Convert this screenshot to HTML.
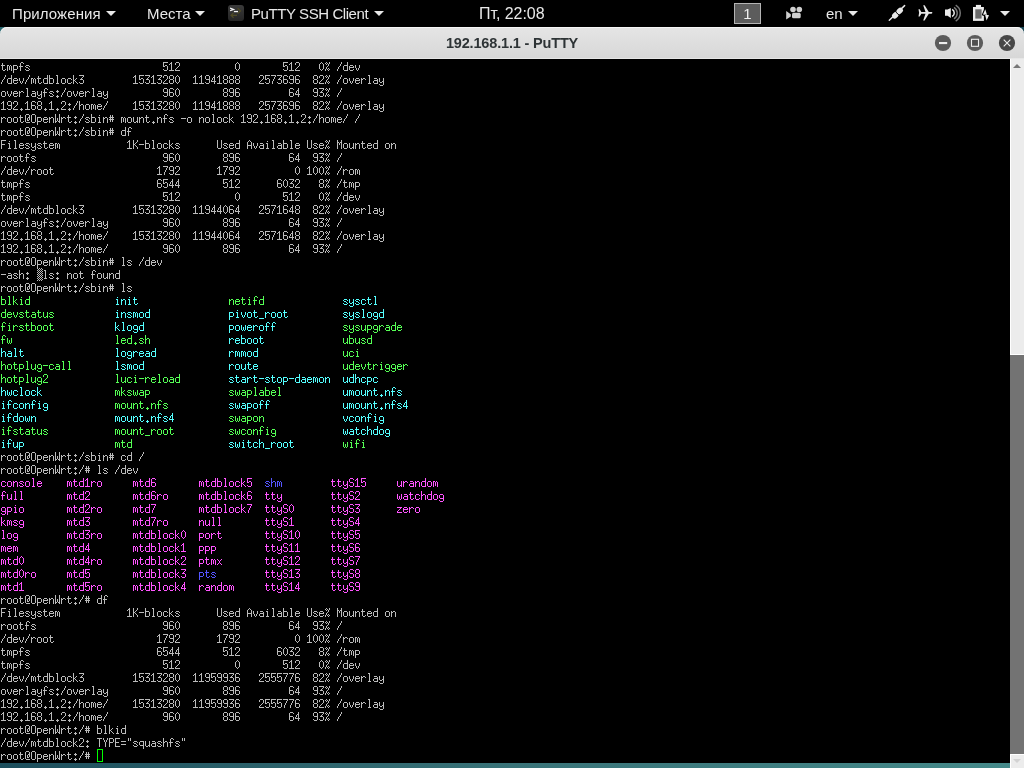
<!DOCTYPE html>
<html><head><meta charset="utf-8"><style>
*{margin:0;padding:0;box-sizing:border-box}
html,body{width:1024px;height:768px;overflow:hidden;background:#000}
body{position:relative;font-family:"Liberation Sans",sans-serif}
.abs{position:absolute}
#panel{left:0;top:0;width:1024px;height:27px;background:#000;color:#e8e8e8;font-size:15px;will-change:transform}
#panel .t{position:absolute;top:5px;line-height:17px;white-space:nowrap}
.arr{position:absolute;width:0;height:0;border-left:5px solid transparent;border-right:5px solid transparent;border-top:5px solid #e8e8e8}
#wall{left:0;top:27px;width:1024px;height:741px;background:linear-gradient(to right,#1c4e5c,#397378 50%,#458a8a)}
#title{left:0;top:27px;width:1024px;height:32px;border-radius:7px 7px 0 0;background:linear-gradient(#e5e5e5,#d7d7d7);box-shadow:inset 0 1px 0 #f6f6f6, inset 0 -1px 0 #e6e6e6;will-change:transform}
#title .tt{position:absolute;left:0;width:1024px;top:8px;letter-spacing:-0.17px;text-align:center;font-weight:bold;font-size:14.5px;color:#2e3436;line-height:17px}
#termbg{left:0;top:59px;width:1010px;height:704px;background:#000}
#term{position:absolute;left:0;top:60px}
#sb{left:1010px;top:59px;width:14px;height:709px;background:#ececec;border-left:1px solid #fff}
#thumb{left:1010px;top:354px;width:14px;height:401px;background:#737373;border-top:1px solid #fff;border-bottom:1px solid #fff}
svg.ic{position:absolute;overflow:visible}
</style></head><body>
<div id="wall" class="abs"></div>
<div class="abs" style="left:0;top:27px;width:1024px;height:14px;background:linear-gradient(to right,#2a6870,#235e66 50%,#184654)"></div>
<div id="panel" class="abs">
  <div class="t" style="left:12px;letter-spacing:0.1px">Приложения</div><div class="arr" style="left:106px;top:11px"></div>
  <div class="t" style="left:147px">Места</div><div class="arr" style="left:195px;top:11px"></div>
  <svg class="ic" style="left:228px;top:5px" width="16" height="16" viewBox="0 0 16 16">
    <defs><linearGradient id="pg" x1="0" y1="0" x2="0" y2="1"><stop offset="0" stop-color="#3b3b3b"/><stop offset="1" stop-color="#252525"/></linearGradient></defs>
    <rect x="0" y="0" width="16" height="16" rx="3" fill="url(#pg)"/>
    <path d="M9.6 3.3l2.9 2.6-2.9 2.6M5.6 7.9l-2.6 2.4 2.6 2.4M3.2 10.3h5.8" stroke="#4f4b25" stroke-width="1.2" fill="none"/>
    <path d="M2.1 3.1L5.6 4.4L2.1 5.7" stroke="#f4f4f4" stroke-width="1.2" fill="none"/>
    <rect x="5.9" y="5.9" width="4.1" height="1.3" fill="#f4f4f4"/>
  </svg>
  <div class="t" style="left:251px;letter-spacing:-0.42px">PuTTY SSH Client</div><div class="arr" style="left:374px;top:11px"></div>
  <div class="t" style="left:479px;font-size:16px;top:5px;letter-spacing:-0.05px">Пт, 22:08</div>
  <div class="abs" style="left:734px;top:3px;width:27px;height:21px;background:#5c5c5c;border:1px solid #b4b4b4;color:#f0f0f0;text-align:center;line-height:19px;font-size:15px">1</div>
  <svg class="ic" style="left:786px;top:6px" width="16" height="14" viewBox="0 0 16 14" fill="#cfcfcf">
    <circle cx="7" cy="3.5" r="2.8"/><circle cx="13.3" cy="3.5" r="2.8"/>
    <rect x="6" y="6.8" width="8.7" height="5.5" rx="1.6"/>
    <path d="M0.2 5.1L4.8 8.2V10.4L0.2 13.6Z"/>
  </svg>
  <div class="t" style="left:826px">en</div><div class="arr" style="left:848px;top:11px"></div>
  <svg class="ic" style="left:886px;top:3px" width="22" height="20" viewBox="0 0 22 20">
    <path d="M3.3 17.3L18.6 2.6" stroke="#e8e8e8" stroke-width="1.5" stroke-linecap="round"/>
    <path d="M6.3 11.5l2.5 2.5" stroke="#000" stroke-width="0"/>
    <rect x="5.9" y="9.6" width="6.8" height="5.4" rx="2.3" transform="rotate(-44 9.3 12.3)" fill="#e8e8e8"/>
    <rect x="10.3" y="5.2" width="6.8" height="5.4" rx="2.3" transform="rotate(-44 13.7 7.9)" fill="#e8e8e8"/>
    <path d="M9.6 8.8L13.1 12.2" stroke="#000" stroke-width="1"/>
  </svg>
  <svg class="ic" style="left:917px;top:4px" width="16" height="16" viewBox="0 0 16 16" fill="#e8e8e8">
    <path d="M1.5 5.2h1.2l1.6 2.7h4.2L6.2 1.2h1.4l4.2 6.7h2.6c0.6 0 1 0.5 1 0.9s-0.4 0.9-1 0.9h-2.6l-4.2 6.7H6.2l2.3-6.7H4.3l-1.6 2.7H1.5l0.6-3.6z"/>
  </svg>
  <svg class="ic" style="left:944px;top:4px" width="18" height="18" viewBox="0 0 18 18">
    <path d="M1 5.6h2.6L6.8 4V13.9L3.6 11.7H1z" fill="#ececec"/>
    <path d="M8.2 5.6a4.2 4.2 0 0 1 0 7.2" stroke="#ececec" stroke-width="1.5" fill="none" transform="translate(0 -0.3)"/>
    <path d="M9.8 3.2a6.8 6.8 0 0 1 0 11.6" stroke="#7a7a7a" stroke-width="1.4" fill="none" transform="translate(0.2 0.1)"/>
    <path d="M11.4 1a9.3 9.3 0 0 1 0 16" stroke="#7a7a7a" stroke-width="1.4" fill="none" transform="translate(0.3 0.1)"/>
  </svg>
  <svg class="ic" style="left:972px;top:4px" width="18" height="18" viewBox="0 0 18 18">
    <rect x="3.9" y="0.9" width="5.1" height="2.3" fill="#ececec"/>
    <rect x="2.15" y="4.15" width="8.6" height="11.6" fill="#6b6b6b" stroke="#ececec" stroke-width="2.3"/>
    <path d="M13.3 5.3L11 10.6L15 11ZM13 10.6L17 11.3L14.6 16.6Z" fill="#000" stroke="#000" stroke-width="2.2" stroke-linejoin="round"/><path d="M13.3 5.3L11 10.6L15 11ZM13 10.6L17 11.3L14.6 16.6Z" fill="#ececec"/>
  </svg>
  <div class="arr" style="left:1000px;top:11px"></div>
</div>
<div id="title" class="abs">
  <div class="tt">192.168.1.1 - PuTTY</div>
  <svg class="ic" style="left:935px;top:8px" width="16" height="16" viewBox="0 0 16 16">
    <circle cx="8" cy="8" r="8.1" fill="#5c5c5c"/><rect x="4" y="7" width="8.2" height="2.1" fill="#eeeeee"/>
  </svg>
  <svg class="ic" style="left:967px;top:8px" width="16" height="16" viewBox="0 0 16 16">
    <circle cx="8" cy="8" r="8.1" fill="#5c5c5c"/><rect x="4.5" y="4.3" width="7" height="7" fill="#4f4f4f" stroke="#eeeeee" stroke-width="1.1"/>
  </svg>
  <svg class="ic" style="left:999px;top:8px" width="16" height="16" viewBox="0 0 16 16">
    <circle cx="8" cy="8" r="8.1" fill="#474747"/><path d="M4.7 4.6L11.4 11.3M11.4 4.6L4.7 11.3" stroke="#eeeeee" stroke-width="1.1"/>
  </svg>
</div>
<div id="termbg" class="abs"></div>
<div id="sb" class="abs"></div>
<div id="thumb" class="abs"></div>
<svg class="ic" style="left:1012px;top:63px" width="10" height="6" viewBox="0 0 10 6"><path d="M1 5L5 1L9 5Z" fill="#777"/></svg>
<svg class="ic" style="left:1012px;top:758px" width="10" height="6" viewBox="0 0 10 6"><path d="M1 1L5 5L9 1Z" fill="#d2d2d2"/></svg>
<svg id="term" width="1010" height="704" viewBox="0 0 1010 704" shape-rendering="crispEdges"><defs>
<path id="g2" d="M0 0h1v1h-1zM2 0h1v1h-1zM4 0h1v1h-1zM1 1h1v1h-1zM3 1h1v1h-1zM5 1h1v1h-1zM0 2h1v1h-1zM2 2h1v1h-1zM4 2h1v1h-1zM1 3h1v1h-1zM3 3h1v1h-1zM5 3h1v1h-1zM0 4h1v1h-1zM2 4h1v1h-1zM4 4h1v1h-1zM1 5h1v1h-1zM3 5h1v1h-1zM5 5h1v1h-1zM0 6h1v1h-1zM2 6h1v1h-1zM4 6h1v1h-1zM1 7h1v1h-1zM3 7h1v1h-1zM5 7h1v1h-1zM0 8h1v1h-1zM2 8h1v1h-1zM4 8h1v1h-1zM1 9h1v1h-1zM3 9h1v1h-1zM5 9h1v1h-1zM0 10h1v1h-1zM2 10h1v1h-1zM4 10h1v1h-1zM1 11h1v1h-1zM3 11h1v1h-1zM5 11h1v1h-1zM0 12h1v1h-1zM2 12h1v1h-1zM4 12h1v1h-1z"/>
<path id="g34" d="M1 2h1v3h-1zM3 2h1v3h-1z"/>
<path id="g35" d="M1 3h1v2h-1zM3 3h1v2h-1zM0 5h5v1h-5zM1 6h1v1h-1zM3 6h1v1h-1zM0 7h5v1h-5zM1 8h1v2h-1zM3 8h1v2h-1z"/>
<path id="g37" d="M1 2h1v1h-1zM4 2h1v2h-1zM0 3h1v1h-1zM2 3h1v1h-1zM1 4h1v1h-1zM3 4h1v2h-1zM2 6h1v1h-1zM1 7h1v2h-1zM3 8h1v1h-1zM0 9h1v2h-1zM2 9h1v1h-1zM4 9h1v1h-1zM3 10h1v1h-1z"/>
<path id="g45" d="M0 6h5v1h-5z"/>
<path id="g46" d="M2 9h1v1h-1zM1 10h3v1h-3zM2 11h1v1h-1z"/>
<path id="g47" d="M4 2h1v2h-1zM3 4h1v2h-1zM2 6h1v1h-1zM1 7h1v2h-1zM0 9h1v2h-1z"/>
<path id="g48" d="M2 2h1v1h-1zM1 3h1v1h-1zM3 3h1v1h-1zM0 4h1v5h-1zM4 4h1v5h-1zM1 9h1v1h-1zM3 9h1v1h-1zM2 10h1v1h-1z"/>
<path id="g49" d="M2 2h1v1h-1zM1 3h2v1h-2zM0 4h1v1h-1zM2 4h1v6h-1zM0 10h5v1h-5z"/>
<path id="g50" d="M1 2h3v1h-3zM0 3h1v2h-1zM4 3h1v3h-1zM3 6h1v1h-1zM2 7h1v1h-1zM1 8h1v1h-1zM0 9h1v1h-1zM0 10h5v1h-5z"/>
<path id="g51" d="M0 2h5v1h-5zM4 3h1v1h-1zM3 4h1v1h-1zM2 5h1v1h-1zM1 6h3v1h-3zM4 7h1v3h-1zM0 9h1v1h-1zM1 10h3v1h-3z"/>
<path id="g52" d="M3 2h1v2h-1zM2 4h2v1h-2zM1 5h1v2h-1zM3 5h1v3h-1zM0 7h1v1h-1zM0 8h5v1h-5zM3 9h1v2h-1z"/>
<path id="g53" d="M0 2h5v1h-5zM0 3h1v3h-1zM2 5h2v1h-2zM0 6h2v1h-2zM4 6h1v4h-1zM0 9h1v1h-1zM1 10h3v1h-3z"/>
<path id="g54" d="M1 2h3v1h-3zM0 3h1v3h-1zM4 3h1v1h-1zM0 6h4v1h-4zM0 7h1v3h-1zM4 7h1v3h-1zM1 10h3v1h-3z"/>
<path id="g55" d="M0 2h5v1h-5zM4 3h1v1h-1zM3 4h1v2h-1zM2 6h1v2h-1zM1 8h1v3h-1z"/>
<path id="g56" d="M1 2h3v1h-3zM0 3h1v3h-1zM4 3h1v3h-1zM1 6h3v1h-3zM0 7h1v3h-1zM4 7h1v3h-1zM1 10h3v1h-3z"/>
<path id="g57" d="M1 2h3v1h-3zM0 3h1v3h-1zM4 3h1v3h-1zM1 6h4v1h-4zM4 7h1v3h-1zM0 9h1v1h-1zM1 10h3v1h-3z"/>
<path id="g58" d="M2 4h1v1h-1zM1 5h3v1h-3zM2 6h1v1h-1zM2 9h1v1h-1zM1 10h3v1h-3zM2 11h1v1h-1z"/>
<path id="g61" d="M0 5h5v1h-5zM0 8h5v1h-5z"/>
<path id="g64" d="M1 2h3v1h-3zM0 3h1v7h-1zM4 3h1v2h-1zM3 5h2v1h-2zM2 6h1v2h-1zM4 6h1v2h-1zM2 8h2v1h-2zM1 10h4v1h-4z"/>
<path id="g65" d="M2 2h1v1h-1zM1 3h1v1h-1zM3 3h1v1h-1zM0 4h1v3h-1zM4 4h1v3h-1zM0 7h5v1h-5zM0 8h1v3h-1zM4 8h1v3h-1z"/>
<path id="g69" d="M0 2h5v1h-5zM0 3h1v3h-1zM0 6h4v1h-4zM0 7h1v3h-1zM0 10h5v1h-5z"/>
<path id="g70" d="M0 2h5v1h-5zM0 3h1v3h-1zM0 6h4v1h-4zM0 7h1v4h-1z"/>
<path id="g75" d="M0 2h1v4h-1zM4 2h1v2h-1zM3 4h1v1h-1zM2 5h1v1h-1zM0 6h2v1h-2zM0 7h1v4h-1zM2 7h1v1h-1zM3 8h1v1h-1zM4 9h1v2h-1z"/>
<path id="g77" d="M0 2h1v2h-1zM4 2h1v2h-1zM0 4h2v1h-2zM3 4h2v1h-2zM0 5h1v6h-1zM2 5h1v2h-1zM4 5h1v6h-1z"/>
<path id="g79" d="M1 2h3v1h-3zM0 3h1v7h-1zM4 3h1v7h-1zM1 10h3v1h-3z"/>
<path id="g80" d="M0 2h4v1h-4zM0 3h1v3h-1zM4 3h1v3h-1zM0 6h4v1h-4zM0 7h1v4h-1z"/>
<path id="g83" d="M1 2h3v1h-3zM0 3h1v3h-1zM4 3h1v1h-1zM1 6h3v1h-3zM4 7h1v3h-1zM0 9h1v1h-1zM1 10h3v1h-3z"/>
<path id="g84" d="M0 2h5v1h-5zM2 3h1v8h-1z"/>
<path id="g85" d="M0 2h1v8h-1zM4 2h1v8h-1zM1 10h3v1h-3z"/>
<path id="g87" d="M0 2h1v7h-1zM4 2h1v7h-1zM2 6h1v3h-1zM0 9h2v1h-2zM3 9h2v1h-2zM0 10h1v1h-1zM4 10h1v1h-1z"/>
<path id="g89" d="M0 2h1v2h-1zM4 2h1v2h-1zM1 4h1v2h-1zM3 4h1v2h-1zM2 6h1v5h-1z"/>
<path id="g95" d="M0 11h5v1h-5z"/>
<path id="g97" d="M1 5h3v1h-3zM4 6h1v1h-1zM1 7h4v1h-4zM0 8h1v2h-1zM4 8h1v2h-1zM1 10h4v1h-4z"/>
<path id="g98" d="M0 2h1v3h-1zM0 5h4v1h-4zM0 6h1v4h-1zM4 6h1v4h-1zM0 10h4v1h-4z"/>
<path id="g99" d="M1 5h3v1h-3zM0 6h1v4h-1zM4 6h1v1h-1zM4 9h1v1h-1zM1 10h3v1h-3z"/>
<path id="g100" d="M4 2h1v3h-1zM1 5h4v1h-4zM0 6h1v4h-1zM4 6h1v4h-1zM1 10h4v1h-4z"/>
<path id="g101" d="M1 5h3v1h-3zM0 6h1v1h-1zM4 6h1v1h-1zM0 7h5v1h-5zM0 8h1v2h-1zM4 9h1v1h-1zM1 10h3v1h-3z"/>
<path id="g102" d="M2 2h2v1h-2zM1 3h1v3h-1zM4 3h1v1h-1zM0 6h4v1h-4zM1 7h1v4h-1z"/>
<path id="g103" d="M1 5h3v1h-3zM0 6h1v3h-1zM4 6h1v3h-1zM1 9h4v1h-4zM4 10h1v2h-1zM0 11h1v1h-1zM1 12h3v1h-3z"/>
<path id="g104" d="M0 2h1v4h-1zM2 5h2v1h-2zM0 6h2v1h-2zM4 6h1v5h-1zM0 7h1v4h-1z"/>
<path id="g105" d="M2 3h1v1h-1zM1 5h2v1h-2zM2 6h1v4h-1zM1 10h3v1h-3z"/>
<path id="g107" d="M0 2h1v5h-1zM3 5h1v1h-1zM2 6h1v1h-1zM0 7h2v1h-2zM0 8h1v3h-1zM2 8h1v1h-1zM3 9h1v1h-1zM4 10h1v1h-1z"/>
<path id="g108" d="M1 2h2v1h-2zM2 3h1v7h-1zM1 10h3v1h-3z"/>
<path id="g109" d="M0 5h2v1h-2zM3 5h1v1h-1zM0 6h1v5h-1zM2 6h1v4h-1zM4 6h1v5h-1z"/>
<path id="g110" d="M0 5h1v1h-1zM2 5h2v1h-2zM0 6h2v1h-2zM4 6h1v5h-1zM0 7h1v4h-1z"/>
<path id="g111" d="M1 5h3v1h-3zM0 6h1v4h-1zM4 6h1v4h-1zM1 10h3v1h-3z"/>
<path id="g112" d="M0 5h4v1h-4zM0 6h1v3h-1zM4 6h1v3h-1zM0 9h4v1h-4zM0 10h1v3h-1z"/>
<path id="g113" d="M1 5h4v1h-4zM0 6h1v3h-1zM4 6h1v3h-1zM1 9h4v1h-4zM4 10h1v3h-1z"/>
<path id="g114" d="M0 5h1v1h-1zM2 5h2v1h-2zM0 6h2v1h-2zM4 6h1v1h-1zM0 7h1v4h-1z"/>
<path id="g115" d="M1 5h3v1h-3zM0 6h1v1h-1zM4 6h1v1h-1zM1 7h2v1h-2zM3 8h1v1h-1zM0 9h1v1h-1zM4 9h1v1h-1zM1 10h3v1h-3z"/>
<path id="g116" d="M1 3h1v2h-1zM0 5h4v1h-4zM1 6h1v4h-1zM4 9h1v1h-1zM2 10h2v1h-2z"/>
<path id="g117" d="M0 5h1v5h-1zM4 5h1v4h-1zM3 9h2v1h-2zM1 10h2v1h-2zM4 10h1v1h-1z"/>
<path id="g118" d="M0 5h1v3h-1zM4 5h1v3h-1zM1 8h1v2h-1zM3 8h1v2h-1zM2 10h1v1h-1z"/>
<path id="g119" d="M0 5h1v5h-1zM4 5h1v5h-1zM2 7h1v3h-1zM1 10h1v1h-1zM3 10h1v1h-1z"/>
<path id="g120" d="M0 5h1v1h-1zM4 5h1v1h-1zM1 6h1v1h-1zM3 6h1v1h-1zM2 7h1v2h-1zM1 9h1v1h-1zM3 9h1v1h-1zM0 10h1v1h-1zM4 10h1v1h-1z"/>
<path id="g121" d="M0 5h1v4h-1zM4 5h1v3h-1zM3 8h2v1h-2zM1 9h2v1h-2zM4 9h1v3h-1zM0 11h1v1h-1zM1 12h3v1h-3z"/>
<path id="g122" d="M0 5h5v1h-5zM3 6h1v1h-1zM2 7h1v1h-1zM1 8h1v1h-1zM0 9h1v1h-1zM0 10h5v1h-5z"/>
</defs>
<g fill="#bbbbbb" transform="translate(0 0)"><use href="#g116" x="1"/><use href="#g109" x="7"/><use href="#g112" x="13"/><use href="#g102" x="19"/><use href="#g115" x="25"/><use href="#g53" x="163"/><use href="#g49" x="169"/><use href="#g50" x="175"/><use href="#g48" x="235"/><use href="#g53" x="283"/><use href="#g49" x="289"/><use href="#g50" x="295"/><use href="#g48" x="319"/><use href="#g37" x="325"/><use href="#g47" x="337"/><use href="#g100" x="343"/><use href="#g101" x="349"/><use href="#g118" x="355"/></g>
<g fill="#bbbbbb" transform="translate(0 13)"><use href="#g47" x="1"/><use href="#g100" x="7"/><use href="#g101" x="13"/><use href="#g118" x="19"/><use href="#g47" x="25"/><use href="#g109" x="31"/><use href="#g116" x="37"/><use href="#g100" x="43"/><use href="#g98" x="49"/><use href="#g108" x="55"/><use href="#g111" x="61"/><use href="#g99" x="67"/><use href="#g107" x="73"/><use href="#g51" x="79"/><use href="#g49" x="133"/><use href="#g53" x="139"/><use href="#g51" x="145"/><use href="#g49" x="151"/><use href="#g51" x="157"/><use href="#g50" x="163"/><use href="#g56" x="169"/><use href="#g48" x="175"/><use href="#g49" x="193"/><use href="#g49" x="199"/><use href="#g57" x="205"/><use href="#g52" x="211"/><use href="#g49" x="217"/><use href="#g56" x="223"/><use href="#g56" x="229"/><use href="#g56" x="235"/><use href="#g50" x="259"/><use href="#g53" x="265"/><use href="#g55" x="271"/><use href="#g51" x="277"/><use href="#g54" x="283"/><use href="#g57" x="289"/><use href="#g54" x="295"/><use href="#g56" x="313"/><use href="#g50" x="319"/><use href="#g37" x="325"/><use href="#g47" x="337"/><use href="#g111" x="343"/><use href="#g118" x="349"/><use href="#g101" x="355"/><use href="#g114" x="361"/><use href="#g108" x="367"/><use href="#g97" x="373"/><use href="#g121" x="379"/></g>
<g fill="#bbbbbb" transform="translate(0 26)"><use href="#g111" x="1"/><use href="#g118" x="7"/><use href="#g101" x="13"/><use href="#g114" x="19"/><use href="#g108" x="25"/><use href="#g97" x="31"/><use href="#g121" x="37"/><use href="#g102" x="43"/><use href="#g115" x="49"/><use href="#g58" x="55"/><use href="#g47" x="61"/><use href="#g111" x="67"/><use href="#g118" x="73"/><use href="#g101" x="79"/><use href="#g114" x="85"/><use href="#g108" x="91"/><use href="#g97" x="97"/><use href="#g121" x="103"/><use href="#g57" x="163"/><use href="#g54" x="169"/><use href="#g48" x="175"/><use href="#g56" x="223"/><use href="#g57" x="229"/><use href="#g54" x="235"/><use href="#g54" x="289"/><use href="#g52" x="295"/><use href="#g57" x="313"/><use href="#g51" x="319"/><use href="#g37" x="325"/><use href="#g47" x="337"/></g>
<g fill="#bbbbbb" transform="translate(0 39)"><use href="#g49" x="1"/><use href="#g57" x="7"/><use href="#g50" x="13"/><use href="#g46" x="19"/><use href="#g49" x="25"/><use href="#g54" x="31"/><use href="#g56" x="37"/><use href="#g46" x="43"/><use href="#g49" x="49"/><use href="#g46" x="55"/><use href="#g50" x="61"/><use href="#g58" x="67"/><use href="#g47" x="73"/><use href="#g104" x="79"/><use href="#g111" x="85"/><use href="#g109" x="91"/><use href="#g101" x="97"/><use href="#g47" x="103"/><use href="#g49" x="133"/><use href="#g53" x="139"/><use href="#g51" x="145"/><use href="#g49" x="151"/><use href="#g51" x="157"/><use href="#g50" x="163"/><use href="#g56" x="169"/><use href="#g48" x="175"/><use href="#g49" x="193"/><use href="#g49" x="199"/><use href="#g57" x="205"/><use href="#g52" x="211"/><use href="#g49" x="217"/><use href="#g56" x="223"/><use href="#g56" x="229"/><use href="#g56" x="235"/><use href="#g50" x="259"/><use href="#g53" x="265"/><use href="#g55" x="271"/><use href="#g51" x="277"/><use href="#g54" x="283"/><use href="#g57" x="289"/><use href="#g54" x="295"/><use href="#g56" x="313"/><use href="#g50" x="319"/><use href="#g37" x="325"/><use href="#g47" x="337"/><use href="#g111" x="343"/><use href="#g118" x="349"/><use href="#g101" x="355"/><use href="#g114" x="361"/><use href="#g108" x="367"/><use href="#g97" x="373"/><use href="#g121" x="379"/></g>
<g fill="#bbbbbb" transform="translate(0 52)"><use href="#g114" x="1"/><use href="#g111" x="7"/><use href="#g111" x="13"/><use href="#g116" x="19"/><use href="#g64" x="25"/><use href="#g79" x="31"/><use href="#g112" x="37"/><use href="#g101" x="43"/><use href="#g110" x="49"/><use href="#g87" x="55"/><use href="#g114" x="61"/><use href="#g116" x="67"/><use href="#g58" x="73"/><use href="#g47" x="79"/><use href="#g115" x="85"/><use href="#g98" x="91"/><use href="#g105" x="97"/><use href="#g110" x="103"/><use href="#g35" x="109"/><use href="#g109" x="121"/><use href="#g111" x="127"/><use href="#g117" x="133"/><use href="#g110" x="139"/><use href="#g116" x="145"/><use href="#g46" x="151"/><use href="#g110" x="157"/><use href="#g102" x="163"/><use href="#g115" x="169"/><use href="#g45" x="181"/><use href="#g111" x="187"/><use href="#g110" x="199"/><use href="#g111" x="205"/><use href="#g108" x="211"/><use href="#g111" x="217"/><use href="#g99" x="223"/><use href="#g107" x="229"/><use href="#g49" x="241"/><use href="#g57" x="247"/><use href="#g50" x="253"/><use href="#g46" x="259"/><use href="#g49" x="265"/><use href="#g54" x="271"/><use href="#g56" x="277"/><use href="#g46" x="283"/><use href="#g49" x="289"/><use href="#g46" x="295"/><use href="#g50" x="301"/><use href="#g58" x="307"/><use href="#g47" x="313"/><use href="#g104" x="319"/><use href="#g111" x="325"/><use href="#g109" x="331"/><use href="#g101" x="337"/><use href="#g47" x="343"/><use href="#g47" x="355"/></g>
<g fill="#bbbbbb" transform="translate(0 65)"><use href="#g114" x="1"/><use href="#g111" x="7"/><use href="#g111" x="13"/><use href="#g116" x="19"/><use href="#g64" x="25"/><use href="#g79" x="31"/><use href="#g112" x="37"/><use href="#g101" x="43"/><use href="#g110" x="49"/><use href="#g87" x="55"/><use href="#g114" x="61"/><use href="#g116" x="67"/><use href="#g58" x="73"/><use href="#g47" x="79"/><use href="#g115" x="85"/><use href="#g98" x="91"/><use href="#g105" x="97"/><use href="#g110" x="103"/><use href="#g35" x="109"/><use href="#g100" x="121"/><use href="#g102" x="127"/></g>
<g fill="#bbbbbb" transform="translate(0 78)"><use href="#g70" x="1"/><use href="#g105" x="7"/><use href="#g108" x="13"/><use href="#g101" x="19"/><use href="#g115" x="25"/><use href="#g121" x="31"/><use href="#g115" x="37"/><use href="#g116" x="43"/><use href="#g101" x="49"/><use href="#g109" x="55"/><use href="#g49" x="127"/><use href="#g75" x="133"/><use href="#g45" x="139"/><use href="#g98" x="145"/><use href="#g108" x="151"/><use href="#g111" x="157"/><use href="#g99" x="163"/><use href="#g107" x="169"/><use href="#g115" x="175"/><use href="#g85" x="217"/><use href="#g115" x="223"/><use href="#g101" x="229"/><use href="#g100" x="235"/><use href="#g65" x="247"/><use href="#g118" x="253"/><use href="#g97" x="259"/><use href="#g105" x="265"/><use href="#g108" x="271"/><use href="#g97" x="277"/><use href="#g98" x="283"/><use href="#g108" x="289"/><use href="#g101" x="295"/><use href="#g85" x="307"/><use href="#g115" x="313"/><use href="#g101" x="319"/><use href="#g37" x="325"/><use href="#g77" x="337"/><use href="#g111" x="343"/><use href="#g117" x="349"/><use href="#g110" x="355"/><use href="#g116" x="361"/><use href="#g101" x="367"/><use href="#g100" x="373"/><use href="#g111" x="385"/><use href="#g110" x="391"/></g>
<g fill="#bbbbbb" transform="translate(0 91)"><use href="#g114" x="1"/><use href="#g111" x="7"/><use href="#g111" x="13"/><use href="#g116" x="19"/><use href="#g102" x="25"/><use href="#g115" x="31"/><use href="#g57" x="163"/><use href="#g54" x="169"/><use href="#g48" x="175"/><use href="#g56" x="223"/><use href="#g57" x="229"/><use href="#g54" x="235"/><use href="#g54" x="289"/><use href="#g52" x="295"/><use href="#g57" x="313"/><use href="#g51" x="319"/><use href="#g37" x="325"/><use href="#g47" x="337"/></g>
<g fill="#bbbbbb" transform="translate(0 104)"><use href="#g47" x="1"/><use href="#g100" x="7"/><use href="#g101" x="13"/><use href="#g118" x="19"/><use href="#g47" x="25"/><use href="#g114" x="31"/><use href="#g111" x="37"/><use href="#g111" x="43"/><use href="#g116" x="49"/><use href="#g49" x="157"/><use href="#g55" x="163"/><use href="#g57" x="169"/><use href="#g50" x="175"/><use href="#g49" x="217"/><use href="#g55" x="223"/><use href="#g57" x="229"/><use href="#g50" x="235"/><use href="#g48" x="295"/><use href="#g49" x="307"/><use href="#g48" x="313"/><use href="#g48" x="319"/><use href="#g37" x="325"/><use href="#g47" x="337"/><use href="#g114" x="343"/><use href="#g111" x="349"/><use href="#g109" x="355"/></g>
<g fill="#bbbbbb" transform="translate(0 117)"><use href="#g116" x="1"/><use href="#g109" x="7"/><use href="#g112" x="13"/><use href="#g102" x="19"/><use href="#g115" x="25"/><use href="#g54" x="157"/><use href="#g53" x="163"/><use href="#g52" x="169"/><use href="#g52" x="175"/><use href="#g53" x="223"/><use href="#g49" x="229"/><use href="#g50" x="235"/><use href="#g54" x="277"/><use href="#g48" x="283"/><use href="#g51" x="289"/><use href="#g50" x="295"/><use href="#g56" x="319"/><use href="#g37" x="325"/><use href="#g47" x="337"/><use href="#g116" x="343"/><use href="#g109" x="349"/><use href="#g112" x="355"/></g>
<g fill="#bbbbbb" transform="translate(0 130)"><use href="#g116" x="1"/><use href="#g109" x="7"/><use href="#g112" x="13"/><use href="#g102" x="19"/><use href="#g115" x="25"/><use href="#g53" x="163"/><use href="#g49" x="169"/><use href="#g50" x="175"/><use href="#g48" x="235"/><use href="#g53" x="283"/><use href="#g49" x="289"/><use href="#g50" x="295"/><use href="#g48" x="319"/><use href="#g37" x="325"/><use href="#g47" x="337"/><use href="#g100" x="343"/><use href="#g101" x="349"/><use href="#g118" x="355"/></g>
<g fill="#bbbbbb" transform="translate(0 143)"><use href="#g47" x="1"/><use href="#g100" x="7"/><use href="#g101" x="13"/><use href="#g118" x="19"/><use href="#g47" x="25"/><use href="#g109" x="31"/><use href="#g116" x="37"/><use href="#g100" x="43"/><use href="#g98" x="49"/><use href="#g108" x="55"/><use href="#g111" x="61"/><use href="#g99" x="67"/><use href="#g107" x="73"/><use href="#g51" x="79"/><use href="#g49" x="133"/><use href="#g53" x="139"/><use href="#g51" x="145"/><use href="#g49" x="151"/><use href="#g51" x="157"/><use href="#g50" x="163"/><use href="#g56" x="169"/><use href="#g48" x="175"/><use href="#g49" x="193"/><use href="#g49" x="199"/><use href="#g57" x="205"/><use href="#g52" x="211"/><use href="#g52" x="217"/><use href="#g48" x="223"/><use href="#g54" x="229"/><use href="#g52" x="235"/><use href="#g50" x="259"/><use href="#g53" x="265"/><use href="#g55" x="271"/><use href="#g49" x="277"/><use href="#g54" x="283"/><use href="#g52" x="289"/><use href="#g56" x="295"/><use href="#g56" x="313"/><use href="#g50" x="319"/><use href="#g37" x="325"/><use href="#g47" x="337"/><use href="#g111" x="343"/><use href="#g118" x="349"/><use href="#g101" x="355"/><use href="#g114" x="361"/><use href="#g108" x="367"/><use href="#g97" x="373"/><use href="#g121" x="379"/></g>
<g fill="#bbbbbb" transform="translate(0 156)"><use href="#g111" x="1"/><use href="#g118" x="7"/><use href="#g101" x="13"/><use href="#g114" x="19"/><use href="#g108" x="25"/><use href="#g97" x="31"/><use href="#g121" x="37"/><use href="#g102" x="43"/><use href="#g115" x="49"/><use href="#g58" x="55"/><use href="#g47" x="61"/><use href="#g111" x="67"/><use href="#g118" x="73"/><use href="#g101" x="79"/><use href="#g114" x="85"/><use href="#g108" x="91"/><use href="#g97" x="97"/><use href="#g121" x="103"/><use href="#g57" x="163"/><use href="#g54" x="169"/><use href="#g48" x="175"/><use href="#g56" x="223"/><use href="#g57" x="229"/><use href="#g54" x="235"/><use href="#g54" x="289"/><use href="#g52" x="295"/><use href="#g57" x="313"/><use href="#g51" x="319"/><use href="#g37" x="325"/><use href="#g47" x="337"/></g>
<g fill="#bbbbbb" transform="translate(0 169)"><use href="#g49" x="1"/><use href="#g57" x="7"/><use href="#g50" x="13"/><use href="#g46" x="19"/><use href="#g49" x="25"/><use href="#g54" x="31"/><use href="#g56" x="37"/><use href="#g46" x="43"/><use href="#g49" x="49"/><use href="#g46" x="55"/><use href="#g50" x="61"/><use href="#g58" x="67"/><use href="#g47" x="73"/><use href="#g104" x="79"/><use href="#g111" x="85"/><use href="#g109" x="91"/><use href="#g101" x="97"/><use href="#g47" x="103"/><use href="#g49" x="133"/><use href="#g53" x="139"/><use href="#g51" x="145"/><use href="#g49" x="151"/><use href="#g51" x="157"/><use href="#g50" x="163"/><use href="#g56" x="169"/><use href="#g48" x="175"/><use href="#g49" x="193"/><use href="#g49" x="199"/><use href="#g57" x="205"/><use href="#g52" x="211"/><use href="#g52" x="217"/><use href="#g48" x="223"/><use href="#g54" x="229"/><use href="#g52" x="235"/><use href="#g50" x="259"/><use href="#g53" x="265"/><use href="#g55" x="271"/><use href="#g49" x="277"/><use href="#g54" x="283"/><use href="#g52" x="289"/><use href="#g56" x="295"/><use href="#g56" x="313"/><use href="#g50" x="319"/><use href="#g37" x="325"/><use href="#g47" x="337"/><use href="#g111" x="343"/><use href="#g118" x="349"/><use href="#g101" x="355"/><use href="#g114" x="361"/><use href="#g108" x="367"/><use href="#g97" x="373"/><use href="#g121" x="379"/></g>
<g fill="#bbbbbb" transform="translate(0 182)"><use href="#g49" x="1"/><use href="#g57" x="7"/><use href="#g50" x="13"/><use href="#g46" x="19"/><use href="#g49" x="25"/><use href="#g54" x="31"/><use href="#g56" x="37"/><use href="#g46" x="43"/><use href="#g49" x="49"/><use href="#g46" x="55"/><use href="#g50" x="61"/><use href="#g58" x="67"/><use href="#g47" x="73"/><use href="#g104" x="79"/><use href="#g111" x="85"/><use href="#g109" x="91"/><use href="#g101" x="97"/><use href="#g47" x="103"/><use href="#g57" x="163"/><use href="#g54" x="169"/><use href="#g48" x="175"/><use href="#g56" x="223"/><use href="#g57" x="229"/><use href="#g54" x="235"/><use href="#g54" x="289"/><use href="#g52" x="295"/><use href="#g57" x="313"/><use href="#g51" x="319"/><use href="#g37" x="325"/><use href="#g47" x="337"/></g>
<g fill="#bbbbbb" transform="translate(0 195)"><use href="#g114" x="1"/><use href="#g111" x="7"/><use href="#g111" x="13"/><use href="#g116" x="19"/><use href="#g64" x="25"/><use href="#g79" x="31"/><use href="#g112" x="37"/><use href="#g101" x="43"/><use href="#g110" x="49"/><use href="#g87" x="55"/><use href="#g114" x="61"/><use href="#g116" x="67"/><use href="#g58" x="73"/><use href="#g47" x="79"/><use href="#g115" x="85"/><use href="#g98" x="91"/><use href="#g105" x="97"/><use href="#g110" x="103"/><use href="#g35" x="109"/><use href="#g108" x="121"/><use href="#g115" x="127"/><use href="#g47" x="139"/><use href="#g100" x="145"/><use href="#g101" x="151"/><use href="#g118" x="157"/></g>
<g fill="#bbbbbb" transform="translate(0 208)"><use href="#g45" x="1"/><use href="#g97" x="7"/><use href="#g115" x="13"/><use href="#g104" x="19"/><use href="#g58" x="25"/><use href="#g2" x="37"/><use href="#g108" x="43"/><use href="#g115" x="49"/><use href="#g58" x="55"/><use href="#g110" x="67"/><use href="#g111" x="73"/><use href="#g116" x="79"/><use href="#g102" x="91"/><use href="#g111" x="97"/><use href="#g117" x="103"/><use href="#g110" x="109"/><use href="#g100" x="115"/></g>
<g fill="#bbbbbb" transform="translate(0 221)"><use href="#g114" x="1"/><use href="#g111" x="7"/><use href="#g111" x="13"/><use href="#g116" x="19"/><use href="#g64" x="25"/><use href="#g79" x="31"/><use href="#g112" x="37"/><use href="#g101" x="43"/><use href="#g110" x="49"/><use href="#g87" x="55"/><use href="#g114" x="61"/><use href="#g116" x="67"/><use href="#g58" x="73"/><use href="#g47" x="79"/><use href="#g115" x="85"/><use href="#g98" x="91"/><use href="#g105" x="97"/><use href="#g110" x="103"/><use href="#g35" x="109"/><use href="#g108" x="121"/><use href="#g115" x="127"/></g>
<g fill="#55ff55" transform="translate(0 234)"><use href="#g98" x="1"/><use href="#g108" x="7"/><use href="#g107" x="13"/><use href="#g105" x="19"/><use href="#g100" x="25"/><use href="#g110" x="229"/><use href="#g101" x="235"/><use href="#g116" x="241"/><use href="#g105" x="247"/><use href="#g102" x="253"/><use href="#g100" x="259"/></g>
<g fill="#55ffff" transform="translate(0 234)"><use href="#g105" x="115"/><use href="#g110" x="121"/><use href="#g105" x="127"/><use href="#g116" x="133"/><use href="#g115" x="343"/><use href="#g121" x="349"/><use href="#g115" x="355"/><use href="#g99" x="361"/><use href="#g116" x="367"/><use href="#g108" x="373"/></g>
<g fill="#55ff55" transform="translate(0 247)"><use href="#g100" x="1"/><use href="#g101" x="7"/><use href="#g118" x="13"/><use href="#g115" x="19"/><use href="#g116" x="25"/><use href="#g97" x="31"/><use href="#g116" x="37"/><use href="#g117" x="43"/><use href="#g115" x="49"/></g>
<g fill="#55ffff" transform="translate(0 247)"><use href="#g105" x="115"/><use href="#g110" x="121"/><use href="#g115" x="127"/><use href="#g109" x="133"/><use href="#g111" x="139"/><use href="#g100" x="145"/><use href="#g112" x="229"/><use href="#g105" x="235"/><use href="#g118" x="241"/><use href="#g111" x="247"/><use href="#g116" x="253"/><use href="#g95" x="259"/><use href="#g114" x="265"/><use href="#g111" x="271"/><use href="#g111" x="277"/><use href="#g116" x="283"/><use href="#g115" x="343"/><use href="#g121" x="349"/><use href="#g115" x="355"/><use href="#g108" x="361"/><use href="#g111" x="367"/><use href="#g103" x="373"/><use href="#g100" x="379"/></g>
<g fill="#55ff55" transform="translate(0 260)"><use href="#g102" x="1"/><use href="#g105" x="7"/><use href="#g114" x="13"/><use href="#g115" x="19"/><use href="#g116" x="25"/><use href="#g98" x="31"/><use href="#g111" x="37"/><use href="#g111" x="43"/><use href="#g116" x="49"/><use href="#g115" x="343"/><use href="#g121" x="349"/><use href="#g115" x="355"/><use href="#g117" x="361"/><use href="#g112" x="367"/><use href="#g103" x="373"/><use href="#g114" x="379"/><use href="#g97" x="385"/><use href="#g100" x="391"/><use href="#g101" x="397"/></g>
<g fill="#55ffff" transform="translate(0 260)"><use href="#g107" x="115"/><use href="#g108" x="121"/><use href="#g111" x="127"/><use href="#g103" x="133"/><use href="#g100" x="139"/><use href="#g112" x="229"/><use href="#g111" x="235"/><use href="#g119" x="241"/><use href="#g101" x="247"/><use href="#g114" x="253"/><use href="#g111" x="259"/><use href="#g102" x="265"/><use href="#g102" x="271"/></g>
<g fill="#55ff55" transform="translate(0 273)"><use href="#g102" x="1"/><use href="#g119" x="7"/><use href="#g108" x="115"/><use href="#g101" x="121"/><use href="#g100" x="127"/><use href="#g46" x="133"/><use href="#g115" x="139"/><use href="#g104" x="145"/><use href="#g117" x="343"/><use href="#g98" x="349"/><use href="#g117" x="355"/><use href="#g115" x="361"/><use href="#g100" x="367"/></g>
<g fill="#55ffff" transform="translate(0 273)"><use href="#g114" x="229"/><use href="#g101" x="235"/><use href="#g98" x="241"/><use href="#g111" x="247"/><use href="#g111" x="253"/><use href="#g116" x="259"/></g>
<g fill="#55ffff" transform="translate(0 286)"><use href="#g104" x="1"/><use href="#g97" x="7"/><use href="#g108" x="13"/><use href="#g116" x="19"/><use href="#g108" x="115"/><use href="#g111" x="121"/><use href="#g103" x="127"/><use href="#g114" x="133"/><use href="#g101" x="139"/><use href="#g97" x="145"/><use href="#g100" x="151"/><use href="#g114" x="229"/><use href="#g109" x="235"/><use href="#g109" x="241"/><use href="#g111" x="247"/><use href="#g100" x="253"/></g>
<g fill="#55ff55" transform="translate(0 286)"><use href="#g117" x="343"/><use href="#g99" x="349"/><use href="#g105" x="355"/></g>
<g fill="#55ff55" transform="translate(0 299)"><use href="#g104" x="1"/><use href="#g111" x="7"/><use href="#g116" x="13"/><use href="#g112" x="19"/><use href="#g108" x="25"/><use href="#g117" x="31"/><use href="#g103" x="37"/><use href="#g45" x="43"/><use href="#g99" x="49"/><use href="#g97" x="55"/><use href="#g108" x="61"/><use href="#g108" x="67"/><use href="#g117" x="343"/><use href="#g100" x="349"/><use href="#g101" x="355"/><use href="#g118" x="361"/><use href="#g116" x="367"/><use href="#g114" x="373"/><use href="#g105" x="379"/><use href="#g103" x="385"/><use href="#g103" x="391"/><use href="#g101" x="397"/><use href="#g114" x="403"/></g>
<g fill="#55ffff" transform="translate(0 299)"><use href="#g108" x="115"/><use href="#g115" x="121"/><use href="#g109" x="127"/><use href="#g111" x="133"/><use href="#g100" x="139"/><use href="#g114" x="229"/><use href="#g111" x="235"/><use href="#g117" x="241"/><use href="#g116" x="247"/><use href="#g101" x="253"/></g>
<g fill="#55ff55" transform="translate(0 312)"><use href="#g104" x="1"/><use href="#g111" x="7"/><use href="#g116" x="13"/><use href="#g112" x="19"/><use href="#g108" x="25"/><use href="#g117" x="31"/><use href="#g103" x="37"/><use href="#g50" x="43"/><use href="#g108" x="115"/><use href="#g117" x="121"/><use href="#g99" x="127"/><use href="#g105" x="133"/><use href="#g45" x="139"/><use href="#g114" x="145"/><use href="#g101" x="151"/><use href="#g108" x="157"/><use href="#g111" x="163"/><use href="#g97" x="169"/><use href="#g100" x="175"/></g>
<g fill="#55ffff" transform="translate(0 312)"><use href="#g115" x="229"/><use href="#g116" x="235"/><use href="#g97" x="241"/><use href="#g114" x="247"/><use href="#g116" x="253"/><use href="#g45" x="259"/><use href="#g115" x="265"/><use href="#g116" x="271"/><use href="#g111" x="277"/><use href="#g112" x="283"/><use href="#g45" x="289"/><use href="#g100" x="295"/><use href="#g97" x="301"/><use href="#g101" x="307"/><use href="#g109" x="313"/><use href="#g111" x="319"/><use href="#g110" x="325"/><use href="#g117" x="343"/><use href="#g100" x="349"/><use href="#g104" x="355"/><use href="#g99" x="361"/><use href="#g112" x="367"/><use href="#g99" x="373"/></g>
<g fill="#55ffff" transform="translate(0 325)"><use href="#g104" x="1"/><use href="#g119" x="7"/><use href="#g99" x="13"/><use href="#g108" x="19"/><use href="#g111" x="25"/><use href="#g99" x="31"/><use href="#g107" x="37"/><use href="#g117" x="343"/><use href="#g109" x="349"/><use href="#g111" x="355"/><use href="#g117" x="361"/><use href="#g110" x="367"/><use href="#g116" x="373"/><use href="#g46" x="379"/><use href="#g110" x="385"/><use href="#g102" x="391"/><use href="#g115" x="397"/></g>
<g fill="#55ff55" transform="translate(0 325)"><use href="#g109" x="115"/><use href="#g107" x="121"/><use href="#g115" x="127"/><use href="#g119" x="133"/><use href="#g97" x="139"/><use href="#g112" x="145"/><use href="#g115" x="229"/><use href="#g119" x="235"/><use href="#g97" x="241"/><use href="#g112" x="247"/><use href="#g108" x="253"/><use href="#g97" x="259"/><use href="#g98" x="265"/><use href="#g101" x="271"/><use href="#g108" x="277"/></g>
<g fill="#55ffff" transform="translate(0 338)"><use href="#g105" x="1"/><use href="#g102" x="7"/><use href="#g99" x="13"/><use href="#g111" x="19"/><use href="#g110" x="25"/><use href="#g102" x="31"/><use href="#g105" x="37"/><use href="#g103" x="43"/><use href="#g115" x="229"/><use href="#g119" x="235"/><use href="#g97" x="241"/><use href="#g112" x="247"/><use href="#g111" x="253"/><use href="#g102" x="259"/><use href="#g102" x="265"/><use href="#g117" x="343"/><use href="#g109" x="349"/><use href="#g111" x="355"/><use href="#g117" x="361"/><use href="#g110" x="367"/><use href="#g116" x="373"/><use href="#g46" x="379"/><use href="#g110" x="385"/><use href="#g102" x="391"/><use href="#g115" x="397"/><use href="#g52" x="403"/></g>
<g fill="#55ff55" transform="translate(0 338)"><use href="#g109" x="115"/><use href="#g111" x="121"/><use href="#g117" x="127"/><use href="#g110" x="133"/><use href="#g116" x="139"/><use href="#g46" x="145"/><use href="#g110" x="151"/><use href="#g102" x="157"/><use href="#g115" x="163"/></g>
<g fill="#55ffff" transform="translate(0 351)"><use href="#g105" x="1"/><use href="#g102" x="7"/><use href="#g100" x="13"/><use href="#g111" x="19"/><use href="#g119" x="25"/><use href="#g110" x="31"/><use href="#g109" x="115"/><use href="#g111" x="121"/><use href="#g117" x="127"/><use href="#g110" x="133"/><use href="#g116" x="139"/><use href="#g46" x="145"/><use href="#g110" x="151"/><use href="#g102" x="157"/><use href="#g115" x="163"/><use href="#g52" x="169"/><use href="#g118" x="343"/><use href="#g99" x="349"/><use href="#g111" x="355"/><use href="#g110" x="361"/><use href="#g102" x="367"/><use href="#g105" x="373"/><use href="#g103" x="379"/></g>
<g fill="#55ff55" transform="translate(0 351)"><use href="#g115" x="229"/><use href="#g119" x="235"/><use href="#g97" x="241"/><use href="#g112" x="247"/><use href="#g111" x="253"/><use href="#g110" x="259"/></g>
<g fill="#55ff55" transform="translate(0 364)"><use href="#g105" x="1"/><use href="#g102" x="7"/><use href="#g115" x="13"/><use href="#g116" x="19"/><use href="#g97" x="25"/><use href="#g116" x="31"/><use href="#g117" x="37"/><use href="#g115" x="43"/><use href="#g109" x="115"/><use href="#g111" x="121"/><use href="#g117" x="127"/><use href="#g110" x="133"/><use href="#g116" x="139"/><use href="#g95" x="145"/><use href="#g114" x="151"/><use href="#g111" x="157"/><use href="#g111" x="163"/><use href="#g116" x="169"/><use href="#g115" x="229"/><use href="#g119" x="235"/><use href="#g99" x="241"/><use href="#g111" x="247"/><use href="#g110" x="253"/><use href="#g102" x="259"/><use href="#g105" x="265"/><use href="#g103" x="271"/></g>
<g fill="#55ffff" transform="translate(0 364)"><use href="#g119" x="343"/><use href="#g97" x="349"/><use href="#g116" x="355"/><use href="#g99" x="361"/><use href="#g104" x="367"/><use href="#g100" x="373"/><use href="#g111" x="379"/><use href="#g103" x="385"/></g>
<g fill="#55ffff" transform="translate(0 377)"><use href="#g105" x="1"/><use href="#g102" x="7"/><use href="#g117" x="13"/><use href="#g112" x="19"/><use href="#g115" x="229"/><use href="#g119" x="235"/><use href="#g105" x="241"/><use href="#g116" x="247"/><use href="#g99" x="253"/><use href="#g104" x="259"/><use href="#g95" x="265"/><use href="#g114" x="271"/><use href="#g111" x="277"/><use href="#g111" x="283"/><use href="#g116" x="289"/></g>
<g fill="#55ff55" transform="translate(0 377)"><use href="#g109" x="115"/><use href="#g116" x="121"/><use href="#g100" x="127"/><use href="#g119" x="343"/><use href="#g105" x="349"/><use href="#g102" x="355"/><use href="#g105" x="361"/></g>
<g fill="#bbbbbb" transform="translate(0 390)"><use href="#g114" x="1"/><use href="#g111" x="7"/><use href="#g111" x="13"/><use href="#g116" x="19"/><use href="#g64" x="25"/><use href="#g79" x="31"/><use href="#g112" x="37"/><use href="#g101" x="43"/><use href="#g110" x="49"/><use href="#g87" x="55"/><use href="#g114" x="61"/><use href="#g116" x="67"/><use href="#g58" x="73"/><use href="#g47" x="79"/><use href="#g115" x="85"/><use href="#g98" x="91"/><use href="#g105" x="97"/><use href="#g110" x="103"/><use href="#g35" x="109"/><use href="#g99" x="121"/><use href="#g100" x="127"/><use href="#g47" x="139"/></g>
<g fill="#bbbbbb" transform="translate(0 403)"><use href="#g114" x="1"/><use href="#g111" x="7"/><use href="#g111" x="13"/><use href="#g116" x="19"/><use href="#g64" x="25"/><use href="#g79" x="31"/><use href="#g112" x="37"/><use href="#g101" x="43"/><use href="#g110" x="49"/><use href="#g87" x="55"/><use href="#g114" x="61"/><use href="#g116" x="67"/><use href="#g58" x="73"/><use href="#g47" x="79"/><use href="#g35" x="85"/><use href="#g108" x="97"/><use href="#g115" x="103"/><use href="#g47" x="115"/><use href="#g100" x="121"/><use href="#g101" x="127"/><use href="#g118" x="133"/></g>
<g fill="#ff55ff" transform="translate(0 416)"><use href="#g99" x="1"/><use href="#g111" x="7"/><use href="#g110" x="13"/><use href="#g115" x="19"/><use href="#g111" x="25"/><use href="#g108" x="31"/><use href="#g101" x="37"/><use href="#g109" x="67"/><use href="#g116" x="73"/><use href="#g100" x="79"/><use href="#g49" x="85"/><use href="#g114" x="91"/><use href="#g111" x="97"/><use href="#g109" x="133"/><use href="#g116" x="139"/><use href="#g100" x="145"/><use href="#g54" x="151"/><use href="#g109" x="199"/><use href="#g116" x="205"/><use href="#g100" x="211"/><use href="#g98" x="217"/><use href="#g108" x="223"/><use href="#g111" x="229"/><use href="#g99" x="235"/><use href="#g107" x="241"/><use href="#g53" x="247"/><use href="#g116" x="331"/><use href="#g116" x="337"/><use href="#g121" x="343"/><use href="#g83" x="349"/><use href="#g49" x="355"/><use href="#g53" x="361"/><use href="#g117" x="397"/><use href="#g114" x="403"/><use href="#g97" x="409"/><use href="#g110" x="415"/><use href="#g100" x="421"/><use href="#g111" x="427"/><use href="#g109" x="433"/></g>
<g fill="#5555ff" transform="translate(0 416)"><use href="#g115" x="265"/><use href="#g104" x="271"/><use href="#g109" x="277"/></g>
<g fill="#ff55ff" transform="translate(0 429)"><use href="#g102" x="1"/><use href="#g117" x="7"/><use href="#g108" x="13"/><use href="#g108" x="19"/><use href="#g109" x="67"/><use href="#g116" x="73"/><use href="#g100" x="79"/><use href="#g50" x="85"/><use href="#g109" x="133"/><use href="#g116" x="139"/><use href="#g100" x="145"/><use href="#g54" x="151"/><use href="#g114" x="157"/><use href="#g111" x="163"/><use href="#g109" x="199"/><use href="#g116" x="205"/><use href="#g100" x="211"/><use href="#g98" x="217"/><use href="#g108" x="223"/><use href="#g111" x="229"/><use href="#g99" x="235"/><use href="#g107" x="241"/><use href="#g54" x="247"/><use href="#g116" x="265"/><use href="#g116" x="271"/><use href="#g121" x="277"/><use href="#g116" x="331"/><use href="#g116" x="337"/><use href="#g121" x="343"/><use href="#g83" x="349"/><use href="#g50" x="355"/><use href="#g119" x="397"/><use href="#g97" x="403"/><use href="#g116" x="409"/><use href="#g99" x="415"/><use href="#g104" x="421"/><use href="#g100" x="427"/><use href="#g111" x="433"/><use href="#g103" x="439"/></g>
<g fill="#ff55ff" transform="translate(0 442)"><use href="#g103" x="1"/><use href="#g112" x="7"/><use href="#g105" x="13"/><use href="#g111" x="19"/><use href="#g109" x="67"/><use href="#g116" x="73"/><use href="#g100" x="79"/><use href="#g50" x="85"/><use href="#g114" x="91"/><use href="#g111" x="97"/><use href="#g109" x="133"/><use href="#g116" x="139"/><use href="#g100" x="145"/><use href="#g55" x="151"/><use href="#g109" x="199"/><use href="#g116" x="205"/><use href="#g100" x="211"/><use href="#g98" x="217"/><use href="#g108" x="223"/><use href="#g111" x="229"/><use href="#g99" x="235"/><use href="#g107" x="241"/><use href="#g55" x="247"/><use href="#g116" x="265"/><use href="#g116" x="271"/><use href="#g121" x="277"/><use href="#g83" x="283"/><use href="#g48" x="289"/><use href="#g116" x="331"/><use href="#g116" x="337"/><use href="#g121" x="343"/><use href="#g83" x="349"/><use href="#g51" x="355"/><use href="#g122" x="397"/><use href="#g101" x="403"/><use href="#g114" x="409"/><use href="#g111" x="415"/></g>
<g fill="#ff55ff" transform="translate(0 455)"><use href="#g107" x="1"/><use href="#g109" x="7"/><use href="#g115" x="13"/><use href="#g103" x="19"/><use href="#g109" x="67"/><use href="#g116" x="73"/><use href="#g100" x="79"/><use href="#g51" x="85"/><use href="#g109" x="133"/><use href="#g116" x="139"/><use href="#g100" x="145"/><use href="#g55" x="151"/><use href="#g114" x="157"/><use href="#g111" x="163"/><use href="#g110" x="199"/><use href="#g117" x="205"/><use href="#g108" x="211"/><use href="#g108" x="217"/><use href="#g116" x="265"/><use href="#g116" x="271"/><use href="#g121" x="277"/><use href="#g83" x="283"/><use href="#g49" x="289"/><use href="#g116" x="331"/><use href="#g116" x="337"/><use href="#g121" x="343"/><use href="#g83" x="349"/><use href="#g52" x="355"/></g>
<g fill="#ff55ff" transform="translate(0 468)"><use href="#g108" x="1"/><use href="#g111" x="7"/><use href="#g103" x="13"/><use href="#g109" x="67"/><use href="#g116" x="73"/><use href="#g100" x="79"/><use href="#g51" x="85"/><use href="#g114" x="91"/><use href="#g111" x="97"/><use href="#g109" x="133"/><use href="#g116" x="139"/><use href="#g100" x="145"/><use href="#g98" x="151"/><use href="#g108" x="157"/><use href="#g111" x="163"/><use href="#g99" x="169"/><use href="#g107" x="175"/><use href="#g48" x="181"/><use href="#g112" x="199"/><use href="#g111" x="205"/><use href="#g114" x="211"/><use href="#g116" x="217"/><use href="#g116" x="265"/><use href="#g116" x="271"/><use href="#g121" x="277"/><use href="#g83" x="283"/><use href="#g49" x="289"/><use href="#g48" x="295"/><use href="#g116" x="331"/><use href="#g116" x="337"/><use href="#g121" x="343"/><use href="#g83" x="349"/><use href="#g53" x="355"/></g>
<g fill="#ff55ff" transform="translate(0 481)"><use href="#g109" x="1"/><use href="#g101" x="7"/><use href="#g109" x="13"/><use href="#g109" x="67"/><use href="#g116" x="73"/><use href="#g100" x="79"/><use href="#g52" x="85"/><use href="#g109" x="133"/><use href="#g116" x="139"/><use href="#g100" x="145"/><use href="#g98" x="151"/><use href="#g108" x="157"/><use href="#g111" x="163"/><use href="#g99" x="169"/><use href="#g107" x="175"/><use href="#g49" x="181"/><use href="#g112" x="199"/><use href="#g112" x="205"/><use href="#g112" x="211"/><use href="#g116" x="265"/><use href="#g116" x="271"/><use href="#g121" x="277"/><use href="#g83" x="283"/><use href="#g49" x="289"/><use href="#g49" x="295"/><use href="#g116" x="331"/><use href="#g116" x="337"/><use href="#g121" x="343"/><use href="#g83" x="349"/><use href="#g54" x="355"/></g>
<g fill="#ff55ff" transform="translate(0 494)"><use href="#g109" x="1"/><use href="#g116" x="7"/><use href="#g100" x="13"/><use href="#g48" x="19"/><use href="#g109" x="67"/><use href="#g116" x="73"/><use href="#g100" x="79"/><use href="#g52" x="85"/><use href="#g114" x="91"/><use href="#g111" x="97"/><use href="#g109" x="133"/><use href="#g116" x="139"/><use href="#g100" x="145"/><use href="#g98" x="151"/><use href="#g108" x="157"/><use href="#g111" x="163"/><use href="#g99" x="169"/><use href="#g107" x="175"/><use href="#g50" x="181"/><use href="#g112" x="199"/><use href="#g116" x="205"/><use href="#g109" x="211"/><use href="#g120" x="217"/><use href="#g116" x="265"/><use href="#g116" x="271"/><use href="#g121" x="277"/><use href="#g83" x="283"/><use href="#g49" x="289"/><use href="#g50" x="295"/><use href="#g116" x="331"/><use href="#g116" x="337"/><use href="#g121" x="343"/><use href="#g83" x="349"/><use href="#g55" x="355"/></g>
<g fill="#ff55ff" transform="translate(0 507)"><use href="#g109" x="1"/><use href="#g116" x="7"/><use href="#g100" x="13"/><use href="#g48" x="19"/><use href="#g114" x="25"/><use href="#g111" x="31"/><use href="#g109" x="67"/><use href="#g116" x="73"/><use href="#g100" x="79"/><use href="#g53" x="85"/><use href="#g109" x="133"/><use href="#g116" x="139"/><use href="#g100" x="145"/><use href="#g98" x="151"/><use href="#g108" x="157"/><use href="#g111" x="163"/><use href="#g99" x="169"/><use href="#g107" x="175"/><use href="#g51" x="181"/><use href="#g116" x="265"/><use href="#g116" x="271"/><use href="#g121" x="277"/><use href="#g83" x="283"/><use href="#g49" x="289"/><use href="#g51" x="295"/><use href="#g116" x="331"/><use href="#g116" x="337"/><use href="#g121" x="343"/><use href="#g83" x="349"/><use href="#g56" x="355"/></g>
<g fill="#5555ff" transform="translate(0 507)"><use href="#g112" x="199"/><use href="#g116" x="205"/><use href="#g115" x="211"/></g>
<g fill="#ff55ff" transform="translate(0 520)"><use href="#g109" x="1"/><use href="#g116" x="7"/><use href="#g100" x="13"/><use href="#g49" x="19"/><use href="#g109" x="67"/><use href="#g116" x="73"/><use href="#g100" x="79"/><use href="#g53" x="85"/><use href="#g114" x="91"/><use href="#g111" x="97"/><use href="#g109" x="133"/><use href="#g116" x="139"/><use href="#g100" x="145"/><use href="#g98" x="151"/><use href="#g108" x="157"/><use href="#g111" x="163"/><use href="#g99" x="169"/><use href="#g107" x="175"/><use href="#g52" x="181"/><use href="#g114" x="199"/><use href="#g97" x="205"/><use href="#g110" x="211"/><use href="#g100" x="217"/><use href="#g111" x="223"/><use href="#g109" x="229"/><use href="#g116" x="265"/><use href="#g116" x="271"/><use href="#g121" x="277"/><use href="#g83" x="283"/><use href="#g49" x="289"/><use href="#g52" x="295"/><use href="#g116" x="331"/><use href="#g116" x="337"/><use href="#g121" x="343"/><use href="#g83" x="349"/><use href="#g57" x="355"/></g>
<g fill="#bbbbbb" transform="translate(0 533)"><use href="#g114" x="1"/><use href="#g111" x="7"/><use href="#g111" x="13"/><use href="#g116" x="19"/><use href="#g64" x="25"/><use href="#g79" x="31"/><use href="#g112" x="37"/><use href="#g101" x="43"/><use href="#g110" x="49"/><use href="#g87" x="55"/><use href="#g114" x="61"/><use href="#g116" x="67"/><use href="#g58" x="73"/><use href="#g47" x="79"/><use href="#g35" x="85"/><use href="#g100" x="97"/><use href="#g102" x="103"/></g>
<g fill="#bbbbbb" transform="translate(0 546)"><use href="#g70" x="1"/><use href="#g105" x="7"/><use href="#g108" x="13"/><use href="#g101" x="19"/><use href="#g115" x="25"/><use href="#g121" x="31"/><use href="#g115" x="37"/><use href="#g116" x="43"/><use href="#g101" x="49"/><use href="#g109" x="55"/><use href="#g49" x="127"/><use href="#g75" x="133"/><use href="#g45" x="139"/><use href="#g98" x="145"/><use href="#g108" x="151"/><use href="#g111" x="157"/><use href="#g99" x="163"/><use href="#g107" x="169"/><use href="#g115" x="175"/><use href="#g85" x="217"/><use href="#g115" x="223"/><use href="#g101" x="229"/><use href="#g100" x="235"/><use href="#g65" x="247"/><use href="#g118" x="253"/><use href="#g97" x="259"/><use href="#g105" x="265"/><use href="#g108" x="271"/><use href="#g97" x="277"/><use href="#g98" x="283"/><use href="#g108" x="289"/><use href="#g101" x="295"/><use href="#g85" x="307"/><use href="#g115" x="313"/><use href="#g101" x="319"/><use href="#g37" x="325"/><use href="#g77" x="337"/><use href="#g111" x="343"/><use href="#g117" x="349"/><use href="#g110" x="355"/><use href="#g116" x="361"/><use href="#g101" x="367"/><use href="#g100" x="373"/><use href="#g111" x="385"/><use href="#g110" x="391"/></g>
<g fill="#bbbbbb" transform="translate(0 559)"><use href="#g114" x="1"/><use href="#g111" x="7"/><use href="#g111" x="13"/><use href="#g116" x="19"/><use href="#g102" x="25"/><use href="#g115" x="31"/><use href="#g57" x="163"/><use href="#g54" x="169"/><use href="#g48" x="175"/><use href="#g56" x="223"/><use href="#g57" x="229"/><use href="#g54" x="235"/><use href="#g54" x="289"/><use href="#g52" x="295"/><use href="#g57" x="313"/><use href="#g51" x="319"/><use href="#g37" x="325"/><use href="#g47" x="337"/></g>
<g fill="#bbbbbb" transform="translate(0 572)"><use href="#g47" x="1"/><use href="#g100" x="7"/><use href="#g101" x="13"/><use href="#g118" x="19"/><use href="#g47" x="25"/><use href="#g114" x="31"/><use href="#g111" x="37"/><use href="#g111" x="43"/><use href="#g116" x="49"/><use href="#g49" x="157"/><use href="#g55" x="163"/><use href="#g57" x="169"/><use href="#g50" x="175"/><use href="#g49" x="217"/><use href="#g55" x="223"/><use href="#g57" x="229"/><use href="#g50" x="235"/><use href="#g48" x="295"/><use href="#g49" x="307"/><use href="#g48" x="313"/><use href="#g48" x="319"/><use href="#g37" x="325"/><use href="#g47" x="337"/><use href="#g114" x="343"/><use href="#g111" x="349"/><use href="#g109" x="355"/></g>
<g fill="#bbbbbb" transform="translate(0 585)"><use href="#g116" x="1"/><use href="#g109" x="7"/><use href="#g112" x="13"/><use href="#g102" x="19"/><use href="#g115" x="25"/><use href="#g54" x="157"/><use href="#g53" x="163"/><use href="#g52" x="169"/><use href="#g52" x="175"/><use href="#g53" x="223"/><use href="#g49" x="229"/><use href="#g50" x="235"/><use href="#g54" x="277"/><use href="#g48" x="283"/><use href="#g51" x="289"/><use href="#g50" x="295"/><use href="#g56" x="319"/><use href="#g37" x="325"/><use href="#g47" x="337"/><use href="#g116" x="343"/><use href="#g109" x="349"/><use href="#g112" x="355"/></g>
<g fill="#bbbbbb" transform="translate(0 598)"><use href="#g116" x="1"/><use href="#g109" x="7"/><use href="#g112" x="13"/><use href="#g102" x="19"/><use href="#g115" x="25"/><use href="#g53" x="163"/><use href="#g49" x="169"/><use href="#g50" x="175"/><use href="#g48" x="235"/><use href="#g53" x="283"/><use href="#g49" x="289"/><use href="#g50" x="295"/><use href="#g48" x="319"/><use href="#g37" x="325"/><use href="#g47" x="337"/><use href="#g100" x="343"/><use href="#g101" x="349"/><use href="#g118" x="355"/></g>
<g fill="#bbbbbb" transform="translate(0 611)"><use href="#g47" x="1"/><use href="#g100" x="7"/><use href="#g101" x="13"/><use href="#g118" x="19"/><use href="#g47" x="25"/><use href="#g109" x="31"/><use href="#g116" x="37"/><use href="#g100" x="43"/><use href="#g98" x="49"/><use href="#g108" x="55"/><use href="#g111" x="61"/><use href="#g99" x="67"/><use href="#g107" x="73"/><use href="#g51" x="79"/><use href="#g49" x="133"/><use href="#g53" x="139"/><use href="#g51" x="145"/><use href="#g49" x="151"/><use href="#g51" x="157"/><use href="#g50" x="163"/><use href="#g56" x="169"/><use href="#g48" x="175"/><use href="#g49" x="193"/><use href="#g49" x="199"/><use href="#g57" x="205"/><use href="#g53" x="211"/><use href="#g57" x="217"/><use href="#g57" x="223"/><use href="#g51" x="229"/><use href="#g54" x="235"/><use href="#g50" x="259"/><use href="#g53" x="265"/><use href="#g53" x="271"/><use href="#g53" x="277"/><use href="#g55" x="283"/><use href="#g55" x="289"/><use href="#g54" x="295"/><use href="#g56" x="313"/><use href="#g50" x="319"/><use href="#g37" x="325"/><use href="#g47" x="337"/><use href="#g111" x="343"/><use href="#g118" x="349"/><use href="#g101" x="355"/><use href="#g114" x="361"/><use href="#g108" x="367"/><use href="#g97" x="373"/><use href="#g121" x="379"/></g>
<g fill="#bbbbbb" transform="translate(0 624)"><use href="#g111" x="1"/><use href="#g118" x="7"/><use href="#g101" x="13"/><use href="#g114" x="19"/><use href="#g108" x="25"/><use href="#g97" x="31"/><use href="#g121" x="37"/><use href="#g102" x="43"/><use href="#g115" x="49"/><use href="#g58" x="55"/><use href="#g47" x="61"/><use href="#g111" x="67"/><use href="#g118" x="73"/><use href="#g101" x="79"/><use href="#g114" x="85"/><use href="#g108" x="91"/><use href="#g97" x="97"/><use href="#g121" x="103"/><use href="#g57" x="163"/><use href="#g54" x="169"/><use href="#g48" x="175"/><use href="#g56" x="223"/><use href="#g57" x="229"/><use href="#g54" x="235"/><use href="#g54" x="289"/><use href="#g52" x="295"/><use href="#g57" x="313"/><use href="#g51" x="319"/><use href="#g37" x="325"/><use href="#g47" x="337"/></g>
<g fill="#bbbbbb" transform="translate(0 637)"><use href="#g49" x="1"/><use href="#g57" x="7"/><use href="#g50" x="13"/><use href="#g46" x="19"/><use href="#g49" x="25"/><use href="#g54" x="31"/><use href="#g56" x="37"/><use href="#g46" x="43"/><use href="#g49" x="49"/><use href="#g46" x="55"/><use href="#g50" x="61"/><use href="#g58" x="67"/><use href="#g47" x="73"/><use href="#g104" x="79"/><use href="#g111" x="85"/><use href="#g109" x="91"/><use href="#g101" x="97"/><use href="#g47" x="103"/><use href="#g49" x="133"/><use href="#g53" x="139"/><use href="#g51" x="145"/><use href="#g49" x="151"/><use href="#g51" x="157"/><use href="#g50" x="163"/><use href="#g56" x="169"/><use href="#g48" x="175"/><use href="#g49" x="193"/><use href="#g49" x="199"/><use href="#g57" x="205"/><use href="#g53" x="211"/><use href="#g57" x="217"/><use href="#g57" x="223"/><use href="#g51" x="229"/><use href="#g54" x="235"/><use href="#g50" x="259"/><use href="#g53" x="265"/><use href="#g53" x="271"/><use href="#g53" x="277"/><use href="#g55" x="283"/><use href="#g55" x="289"/><use href="#g54" x="295"/><use href="#g56" x="313"/><use href="#g50" x="319"/><use href="#g37" x="325"/><use href="#g47" x="337"/><use href="#g111" x="343"/><use href="#g118" x="349"/><use href="#g101" x="355"/><use href="#g114" x="361"/><use href="#g108" x="367"/><use href="#g97" x="373"/><use href="#g121" x="379"/></g>
<g fill="#bbbbbb" transform="translate(0 650)"><use href="#g49" x="1"/><use href="#g57" x="7"/><use href="#g50" x="13"/><use href="#g46" x="19"/><use href="#g49" x="25"/><use href="#g54" x="31"/><use href="#g56" x="37"/><use href="#g46" x="43"/><use href="#g49" x="49"/><use href="#g46" x="55"/><use href="#g50" x="61"/><use href="#g58" x="67"/><use href="#g47" x="73"/><use href="#g104" x="79"/><use href="#g111" x="85"/><use href="#g109" x="91"/><use href="#g101" x="97"/><use href="#g47" x="103"/><use href="#g57" x="163"/><use href="#g54" x="169"/><use href="#g48" x="175"/><use href="#g56" x="223"/><use href="#g57" x="229"/><use href="#g54" x="235"/><use href="#g54" x="289"/><use href="#g52" x="295"/><use href="#g57" x="313"/><use href="#g51" x="319"/><use href="#g37" x="325"/><use href="#g47" x="337"/></g>
<g fill="#bbbbbb" transform="translate(0 663)"><use href="#g114" x="1"/><use href="#g111" x="7"/><use href="#g111" x="13"/><use href="#g116" x="19"/><use href="#g64" x="25"/><use href="#g79" x="31"/><use href="#g112" x="37"/><use href="#g101" x="43"/><use href="#g110" x="49"/><use href="#g87" x="55"/><use href="#g114" x="61"/><use href="#g116" x="67"/><use href="#g58" x="73"/><use href="#g47" x="79"/><use href="#g35" x="85"/><use href="#g98" x="97"/><use href="#g108" x="103"/><use href="#g107" x="109"/><use href="#g105" x="115"/><use href="#g100" x="121"/></g>
<g fill="#bbbbbb" transform="translate(0 676)"><use href="#g47" x="1"/><use href="#g100" x="7"/><use href="#g101" x="13"/><use href="#g118" x="19"/><use href="#g47" x="25"/><use href="#g109" x="31"/><use href="#g116" x="37"/><use href="#g100" x="43"/><use href="#g98" x="49"/><use href="#g108" x="55"/><use href="#g111" x="61"/><use href="#g99" x="67"/><use href="#g107" x="73"/><use href="#g50" x="79"/><use href="#g58" x="85"/><use href="#g84" x="97"/><use href="#g89" x="103"/><use href="#g80" x="109"/><use href="#g69" x="115"/><use href="#g61" x="121"/><use href="#g34" x="127"/><use href="#g115" x="133"/><use href="#g113" x="139"/><use href="#g117" x="145"/><use href="#g97" x="151"/><use href="#g115" x="157"/><use href="#g104" x="163"/><use href="#g102" x="169"/><use href="#g115" x="175"/><use href="#g34" x="181"/></g>
<g fill="#bbbbbb" transform="translate(0 689)"><use href="#g114" x="1"/><use href="#g111" x="7"/><use href="#g111" x="13"/><use href="#g116" x="19"/><use href="#g64" x="25"/><use href="#g79" x="31"/><use href="#g112" x="37"/><use href="#g101" x="43"/><use href="#g110" x="49"/><use href="#g87" x="55"/><use href="#g114" x="61"/><use href="#g116" x="67"/><use href="#g58" x="73"/><use href="#g47" x="79"/><use href="#g35" x="85"/></g>
<rect x="97.5" y="689.5" width="5" height="12" fill="none" stroke="#00ff00" stroke-width="1"/>
</svg>
</body></html>
